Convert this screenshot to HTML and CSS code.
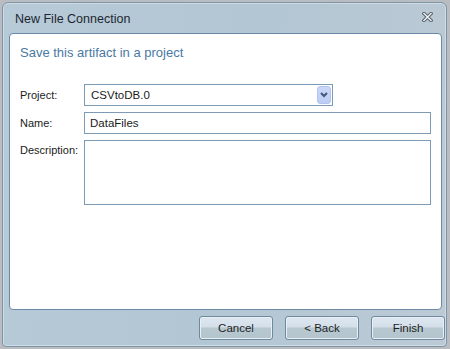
FILE: index.html
```html
<!DOCTYPE html>
<html lang="en">
<head>
    <meta charset="UTF-8">
    <title>New File Connection</title>
    <link rel="stylesheet" href="styles.css">
</head>
<body>
    <div class="window">
        <div class="titlebar">
            <span class="title">New File Connection</span>
            <svg class="close" width="11" height="10" viewBox="0 0 11 10">
                <path d="M2 1.5 L9 8.5 M9 1.5 L2 8.5" stroke="#59636d" stroke-width="3.4" stroke-linecap="square"/>
                <path d="M2 1.5 L9 8.5 M9 1.5 L2 8.5" stroke="#eef2f5" stroke-width="1.4" stroke-linecap="square"/>
            </svg>
        </div>

        <div class="panel">
            <h2>Save this artifact in a project</h2>

            <div class="form-row">
                <label for="project">Project:</label>
                <div class="select" id="project">
                    <span>CSVtoDB.0</span>
                    <span class="drop">
                        <svg width="8" height="6" viewBox="0 0 8 6">
                            <path d="M1 1 L4 4 L7 1" fill="none" stroke="#44577a" stroke-width="2"/>
                        </svg>
                    </span>
                </div>
            </div>

            <div class="form-row">
                <label for="name">Name:</label>
                <input type="text" id="name" value="DataFiles">
            </div>

            <div class="form-row top">
                <label for="description">Description:</label>
                <textarea id="description"></textarea>
            </div>
        </div>

        <div class="buttons">
            <button>Cancel</button>
            <button>&lt; Back</button>
            <button>Finish</button>
        </div>
    </div>
</body>
</html>
```

FILE: styles.css
```css
body {
    margin: 0;
    padding: 2px 3px 2px 2px;
    background-color: #b9bcc0;
    font-family: "Liberation Sans", Arial, sans-serif;
    font-size: 11px;
    color: #1b1b1b;
}
.window {
    box-sizing: border-box;
    width: 445px;
    height: 345px;
    border: 1px solid #7f95a6;
    border-radius: 6px 6px 4px 4px;
    background: linear-gradient(100deg, #b6cad8 0%, #b2c6d3 50%, #bccad5 100%);
    box-shadow: inset 0 0 0 1px #cfdce6;
    display: flex;
    flex-direction: column;
}
.titlebar {
    height: 30px;
    display: flex;
    align-items: center;
    justify-content: space-between;
    padding: 0 12px 0 12px;
}
.title {
    font-size: 12.5px;
    color: #1e2731;
    margin-top: 1px;
}
.close {
    margin-top: -3px;
    margin-right: 1px;
}
.panel {
    box-sizing: border-box;
    height: 277px;
    margin: 0 4px 0 6px;
    background-color: #fff;
    border: 1px solid #6a8aa6;
    border-radius: 4px;
    padding: 11px 10px 0 10px;
}
h2 {
    margin: 0 0 23px 0;
    font-size: 13px;
    font-weight: normal;
    line-height: 16px;
    color: #4979a3;
}
.form-row {
    display: flex;
    align-items: center;
    margin-bottom: 6px;
}
.form-row.top {
    align-items: flex-start;
}
.form-row.top label {
    padding-top: 4px;
}
label {
    width: 64px;
    flex-shrink: 0;
}
.select, input, textarea {
    box-sizing: border-box;
    border: 1px solid #7d9bb4;
    font-family: inherit;
    font-size: 11.5px;
    color: #1b1b1b;
    background-color: #fff;
    margin: 0;
}
.select {
    width: 249px;
    height: 22px;
    display: flex;
    align-items: center;
    justify-content: space-between;
    padding: 0 1px 0 6px;
}
.drop {
    width: 14px;
    height: 18px;
    box-sizing: border-box;
    border: 1px solid #b3c5ec;
    border-radius: 3px;
    background: linear-gradient(#cbd8f8, #bccdf4);
    display: flex;
    align-items: center;
    justify-content: center;
}
input {
    width: 348px;
    height: 22px;
    padding: 0 5px;
    outline: none;
}
textarea {
    width: 348px;
    height: 65px;
    resize: none;
    outline: none;
}
.buttons {
    display: flex;
    justify-content: flex-end;
    gap: 12px;
    padding: 6px 1px 0 0;
}
button {
    box-sizing: border-box;
    width: 74px;
    height: 24px;
    border: 1px solid #6f899d;
    border-radius: 3px;
    background: linear-gradient(#dee7f0 0%, #d4dfea 45%, #b8c8d1 50%, #b4c4cd 100%);
    box-shadow: inset 0 0 0 1px #e9f0f5;
    font-family: inherit;
    font-size: 11.5px;
    color: #1e1e1e;
    padding: 0;
}
```
